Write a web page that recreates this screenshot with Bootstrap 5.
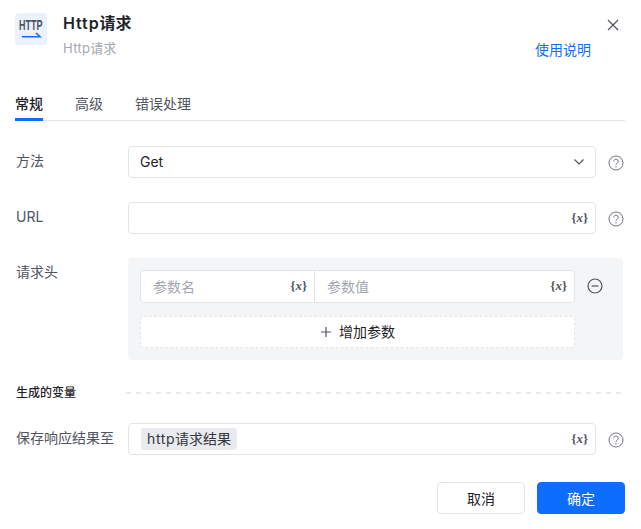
<!DOCTYPE html>
<html lang="zh-CN">
<head>
  <meta charset="UTF-8">
  <meta name="viewport" content="width=device-width, initial-scale=1.0">
  <title>Http请求</title>
  <link href="https://cdn.jsdelivr.net/npm/bootstrap@5.3.2/dist/css/bootstrap.min.css" rel="stylesheet">
  <script src="https://cdn.jsdelivr.net/npm/bootstrap@5.3.2/dist/js/bootstrap.bundle.min.js"></script>
  <style>
    body {
      width: 641px;
      height: 529px;
      overflow: hidden;
      background: #fff;
      font-family: "Inter", "Noto Sans CJK SC", sans-serif;
      font-size: 14px;
      line-height: 20px;
      color: #1f2329;
    }
    .dialog { padding: 13px 16px 0 15px; position: relative; }
    .app-icon {
      width: 32px; height: 32px; background: #eaf2fe; border-radius: 4px;
      flex: none;
    }
    .title { font-size: 16px; font-weight: 600; line-height: 22px; color: #1f2329; margin-top: -1px; }
    .title span { letter-spacing: .9px; }
    .subtitle { font-size: 13px; line-height: 18px; color: #a4a7b0; margin-top: 5px; }
    .subtitle span { letter-spacing: .3px; }
    .btn-x { position: absolute; top: 19px; right: 22px; line-height: 0; padding: 0; border: 0; background: none; }
    .help-link { position: absolute; top: 40px; right: 50px; font-size: 14px; line-height: 20px; color: #0d6efd; text-decoration: none; }
    .tabs { margin-top: 28px; height: 36px; border-bottom: 1px solid #e3e4e8; gap: 32px; }
    .tabs .nav-link {
      padding: 9px 0 0; height: 36px; color: #50545e; font-size: 14px; border-bottom: 3px solid transparent;
    }
    .tabs .nav-link.active { color: #1f2329; font-weight: 500; border-bottom-color: #0d6efd; }
    .field-label { width: 113px; flex: none; color: #50545e; padding-left: 1px; }
    .align-items-center > .field-label { margin-top: -2px; }
    .field {
      width: 468px; height: 32px; border: 1px solid #e3e4e8; border-radius: 4px; background: #fff;
      padding: 0 7px 0 11px; flex: none;
    }
    .var { font-family: "Liberation Serif", serif; font-size: 13px; font-weight: 700; color: #50545e; line-height: 1; white-space: nowrap; margin-bottom: 2px; }
    .var i { font-style: italic; }
    .help { width: 16px; height: 16px; margin: 2px 0 0 12px; flex: none; }
    .minus { margin: -2px 0 0 12px; }
    .row-method { margin-top: 25px; }
    .row-url { margin-top: 24px; }
    .row-headers { margin-top: 24px; }
    .panel { width: 495px; height: 102px; background: #f4f5f7; border-radius: 4px; padding: 12px; }
    .pair { width: 435px; height: 33px; border: 1px solid #e3e4e8; border-radius: 4px; background: #fff; flex: none; }
    .pair > div { padding: 0 7px 0 12px; }
    .pair > div + div { border-left: 1px solid #e3e4e8; }
    .param-name { width: 173px; flex: none; }
    .param-value { flex: 1; }
    .hint { color: #a4a7b0; }
    .add-param {
      width: 435px; height: 32px; margin-top: 13px; padding: 0; border: 1px dashed #e3e4e8; border-radius: 4px;
      background: #fff; font-size: 14px; color: #1f2329; gap: 7px;
    }
    .section { margin-top: 23px; margin-right: 2px; height: 20px; }
    .section span { width: 111px; flex: none; font-size: 12px; font-weight: 500; color: #1f2329; padding-left: 1px; }
    .section hr {
      flex: 1; height: 2px; margin: 0; border: 0; opacity: 1;
      background: repeating-linear-gradient(90deg, #e9eaee 0 5px, transparent 5px 10px);
    }
    .row-save { margin-top: 20px; }
    .tag { background: #e9ebef; border-radius: 3px; padding: 0 6px; height: 22px; line-height: 22px; color: #33373e; margin-left: 1px; }
    .tag b { font-weight: 400; letter-spacing: .6px; }
    .footer { margin-top: 27px; gap: 12px; }
    .footer .btn { width: 88px; height: 32px; padding: 0; font-size: 14px; border-radius: 4px; }
    .btn-cancel { border: 1px solid #e3e4e8; background: #fff; color: #1f2329; }
    .btn-ok { background: #0d6efd; border: 1px solid #0d6efd; color: #fff; }
  </style>
</head>
<body>
  <div class="dialog">
    <!-- 头部 -->
    <div class="d-flex">
      <div class="app-icon">
        <svg width="32" height="32" viewBox="0 0 32 32" fill="none">
          <text transform="translate(4 17) scale(.6 1)" font-family="Liberation Sans, sans-serif" font-size="15" font-weight="700" fill="#50545e">HTTP</text>
          <path d="M7 23.700H25L21 20" stroke="#0d6efd" stroke-width="1.600"/>
        </svg>
      </div>
      <div class="ms-3">
        <div class="title"><span>Http</span>请求</div>
        <div class="subtitle"><span>Http</span>请求</div>
      </div>
    </div>
    <button class="btn-x" type="button" aria-label="关闭">
      <svg width="12" height="12" viewBox="0 0 12 12" fill="none"><path d="M1 1l10 10M11 1L1 11" stroke="#50545e" stroke-width="1.200"/></svg>
    </button>
    <a class="help-link" href="#">使用说明</a>

    <!-- 标签页 -->
    <ul class="nav tabs">
      <li class="nav-item"><a class="nav-link active" href="#">常规</a></li>
      <li class="nav-item"><a class="nav-link" href="#">高级</a></li>
      <li class="nav-item"><a class="nav-link" href="#">错误处理</a></li>
    </ul>

    <!-- 方法 -->
    <div class="d-flex align-items-center row-method">
      <div class="field-label">方法</div>
      <div class="field d-flex align-items-center justify-content-between">
        <span>Get</span>
        <svg class="me-1" width="10" height="6" viewBox="0 0 10 6" fill="none"><path d="M.5.5 5 5 9.500.5" stroke="#50545e" stroke-width="1.200"/></svg>
      </div>
      <svg class="help" viewBox="0 0 16 16" fill="none"><circle cx="8" cy="8" r="7" stroke="#6f737c"/><path d="M5.800 6.300a2.200 2.200 0 1 1 3.400 1.800c-.8.500-1.200.9-1.200 1.800" stroke="#6f737c"/><circle cx="8" cy="11.700" r=".7" fill="#6f737c"/></svg>
    </div>

    <!-- URL -->
    <div class="d-flex align-items-center row-url">
      <div class="field-label">URL</div>
      <div class="field d-flex align-items-center justify-content-end">
        <span class="var">{<i>x</i>}</span>
      </div>
      <svg class="help" viewBox="0 0 16 16" fill="none"><circle cx="8" cy="8" r="7" stroke="#6f737c"/><path d="M5.800 6.300a2.200 2.200 0 1 1 3.400 1.800c-.8.500-1.200.9-1.200 1.800" stroke="#6f737c"/><circle cx="8" cy="11.700" r=".7" fill="#6f737c"/></svg>
    </div>

    <!-- 请求头 -->
    <div class="d-flex row-headers">
      <div class="field-label pt-1">请求头</div>
      <div class="panel">
        <div class="d-flex align-items-center">
          <div class="pair d-flex">
            <div class="param-name d-flex align-items-center justify-content-between">
              <span class="hint">参数名</span><span class="var">{<i>x</i>}</span>
            </div>
            <div class="param-value d-flex align-items-center justify-content-between">
              <span class="hint">参数值</span><span class="var">{<i>x</i>}</span>
            </div>
          </div>
          <svg class="flex-shrink-0 minus" width="16" height="16" viewBox="0 0 16 16" fill="none"><circle cx="8" cy="8" r="7" stroke="#50545e" stroke-width="1.200"/><path d="M4.500 8h7" stroke="#50545e" stroke-width="1.200"/></svg>
        </div>
        <button class="add-param d-flex align-items-center justify-content-center" type="button">
          <svg width="12" height="12" viewBox="0 0 12 12" fill="none"><path d="M6 1v10M1 6h10" stroke="#50545e" stroke-width="1.200"/></svg>
          增加参数
        </button>
      </div>
    </div>

    <!-- 生成的变量 -->
    <div class="section d-flex align-items-center">
      <span>生成的变量</span>
      <hr>
    </div>

    <!-- 保存响应结果至 -->
    <div class="d-flex align-items-center row-save">
      <div class="field-label">保存响应结果至</div>
      <div class="field d-flex align-items-center justify-content-between">
        <span class="tag"><b>http</b>请求结果</span>
        <span class="var">{<i>x</i>}</span>
      </div>
      <svg class="help" viewBox="0 0 16 16" fill="none"><circle cx="8" cy="8" r="7" stroke="#6f737c"/><path d="M5.800 6.300a2.200 2.200 0 1 1 3.400 1.800c-.8.500-1.200.9-1.200 1.800" stroke="#6f737c"/><circle cx="8" cy="11.700" r=".7" fill="#6f737c"/></svg>
    </div>

    <!-- 按钮 -->
    <div class="footer d-flex justify-content-end">
      <button class="btn btn-cancel" type="button">取消</button>
      <button class="btn btn-ok" type="button">确定</button>
    </div>
  </div>
</body>
</html>
